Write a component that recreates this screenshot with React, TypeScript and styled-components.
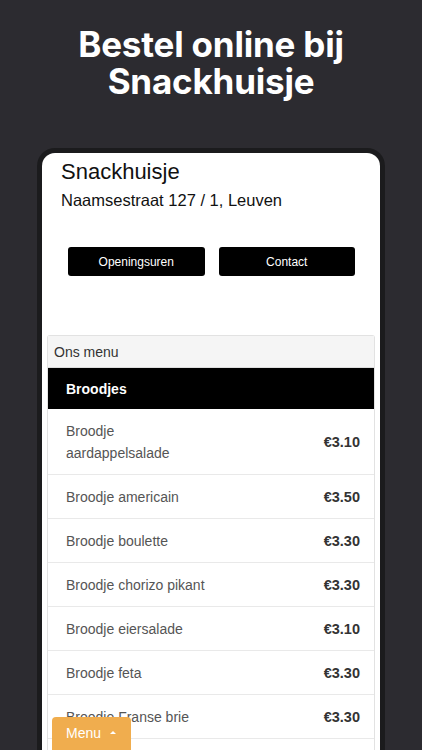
import React from "react";
import styled, { createGlobalStyle } from "styled-components";

const Global = createGlobalStyle`
  html, body { margin: 0; padding: 0; background: #2c2b30; height: 100%; overflow: hidden; }
  #root { height: 100%; }
`;

const Page = styled.div`
  height: 750px;
  display: flex;
  flex-direction: column;
  align-items: center;
  overflow: hidden;
  font-family: "Liberation Sans", Arial, sans-serif;
`;

const Title = styled.h1`
  margin: 26px 0 0;
  color: #fff;
  font-family: Inter, "Open Sans", sans-serif;
  font-weight: 700;
  font-size: 35px;
  line-height: 37px;
  text-align: center;
  letter-spacing: -0.2px;
`;

const Phone = styled.div`
  margin-top: 48px;
  width: 348px;
  flex: 1;
  min-height: 0;
  box-sizing: border-box;
  padding: 5px 5px 0;
  background: #1b1b1d;
  border-radius: 18px 18px 0 0;
  display: flex;
  position: relative;
`;

const Screen = styled.div`
  flex: 1;
  min-height: 0;
  background: #fff;
  border-radius: 13px 13px 0 0;
  overflow: hidden;
  display: flex;
  flex-direction: column;
`;

const ShopName = styled.div`
  padding: 6px 0 0 19px;
  font-size: 22px;
  line-height: 26px;
  color: #111;
`;

const Address = styled.div`
  padding: 4px 0 0 19px;
  font-size: 16.5px;
  line-height: 22px;
  color: #111;
`;

const ButtonRow = styled.div`
  display: grid;
  grid-template-columns: 1fr 1fr;
  gap: 14px;
  padding: 36px 25px 0 26px;
`;

const DarkButton = styled.div`
  height: 29px;
  background: #000;
  border-radius: 3px;
  color: #fff;
  font-size: 12px;
  display: flex;
  align-items: center;
  justify-content: center;
`;

const Panel = styled.div`
  flex-shrink: 0;
  margin: 59px 5px 0 5px;
  border: 1px solid #e2e2e2;
  border-radius: 3px 3px 0 0;
  border-bottom: none;
`;

const PanelHeading = styled.div`
  background: #f5f5f5;
  height: 31px;
  padding-left: 6px;
  display: flex;
  align-items: center;
  font-size: 14px;
  color: #333;
  border-bottom: 1px solid #ddd;
`;

const Category = styled.div`
  background: #000;
  height: 41px;
  padding-left: 18px;
  display: flex;
  align-items: center;
  color: #fff;
  font-weight: 700;
  font-size: 14px;
`;

const Item = styled.div<{ $tall?: boolean }>`
  min-height: ${(p) => (p.$tall ? 65 : 43)}px;
  padding: 0 14px 0 18px;
  display: flex;
  align-items: center;
  justify-content: space-between;
  border-bottom: 1px solid #e9e9e9;
`;

const ItemName = styled.div`
  font-size: 14px;
  line-height: 22px;
  color: #555;
  max-width: 140px;
`;

const Price = styled.div`
  font-size: 14.5px;
  font-weight: 700;
  color: #333;
`;

const MenuButton = styled.div`
  position: absolute;
  left: 15px;
  bottom: -4px;
  width: 79px;
  height: 37px;
  box-sizing: border-box;
  background: #f0ad4e;
  border-radius: 4px;
  color: #fff;
  font-size: 14px;
  display: flex;
  align-items: center;
  padding: 0 0 5px 14px;
  gap: 9px;
`;

const Caret = styled.span`
  width: 0;
  height: 0;
  border-left: 3px solid transparent;
  border-right: 3px solid transparent;
  border-bottom: 3px solid #fff;
  margin-top: -1px;
`;

const items: { name: string; price: string; tall?: boolean }[] = [
  { name: "Broodje aardappelsalade", price: "€3.10", tall: true },
  { name: "Broodje americain", price: "€3.50" },
  { name: "Broodje boulette", price: "€3.30" },
  { name: "Broodje chorizo pikant", price: "€3.30" },
  { name: "Broodje eiersalade", price: "€3.10" },
  { name: "Broodje feta", price: "€3.30" },
  { name: "Broodje Franse brie", price: "€3.30" },
  { name: "Broodje gehakt", price: "€3.30" },
];

export default function App() {
  return (
    <Page>
      <Global />
      <Title>
        Bestel online bij
        <br />
        Snackhuisje
      </Title>
      <Phone>
        <Screen>
          <ShopName>Snackhuisje</ShopName>
          <Address>Naamsestraat 127 / 1, Leuven</Address>
          <ButtonRow>
            <DarkButton>Openingsuren</DarkButton>
            <DarkButton>Contact</DarkButton>
          </ButtonRow>
          <Panel>
            <PanelHeading>Ons menu</PanelHeading>
            <Category>Broodjes</Category>
            {items.map((it) => (
              <Item key={it.name} $tall={it.tall}>
                <ItemName>{it.name}</ItemName>
                <Price>{it.price}</Price>
              </Item>
            ))}
          </Panel>
        </Screen>
        <MenuButton>
          Menu <Caret />
        </MenuButton>
      </Phone>
    </Page>
  );
}
